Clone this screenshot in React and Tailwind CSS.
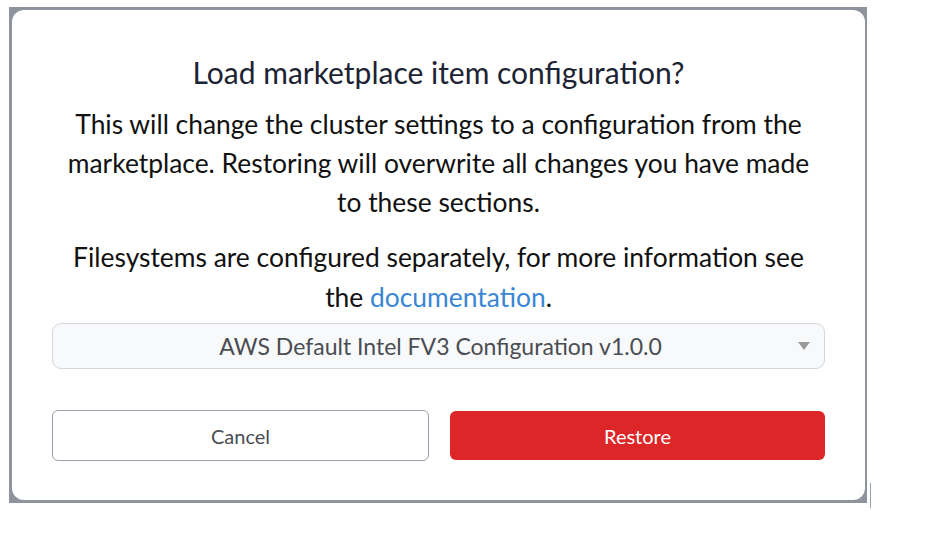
const RestoreDialog = () => {
  return (
    <div className="flex h-full w-full flex-col rounded-[12px] bg-white px-[40px] pt-[43px]">
      {/* Header */}
      <h2 className="text-center text-[30px] leading-[38px] text-[#1c2333]">
        Load marketplace item configuration?
      </h2>

      {/* Body */}
      <p className="mt-[14px] px-[6px] text-center text-[26.4px] leading-[39px] text-[#111]">
        This will change the cluster settings to a configuration from the marketplace. Restoring will
        overwrite all changes you have made to these sections.
      </p>
      <p className="mt-[15px] px-[6px] text-center text-[26.4px] leading-[40px] text-[#111]">
        Filesystems are configured separately, for more information see the{' '}
        <a href="#" className="text-[#3a86d4]">
          documentation
        </a>
        .
      </p>

      {/* Config select */}
      <div className="mt-[6px] flex h-[46px] items-center rounded-[9px] border border-[#d3d6dc] bg-[#f8f9fb] pl-[30px] pr-[14px]">
        <span className="flex-1 text-center text-[23px] text-[#4a4d52]">
          AWS Default Intel FV3 Configuration v1.0.0
        </span>
        <svg width="12" height="8" viewBox="0 0 12 8" className="text-[#9a9a9a]">
          <path d="M0 0h12L6 8z" fill="currentColor" />
        </svg>
      </div>

      {/* Actions */}
      <div className="mt-[41px] flex gap-[21px]">
        <button className="flex h-[51px] flex-1 items-center justify-center rounded-[6px] border border-[#9aa0ab] bg-white text-[20px] text-[#4a4d52]">
          Cancel
        </button>
        <button className="mt-px flex h-[49px] flex-1 items-center justify-center rounded-[6px] bg-[#dc2628] text-[20px] text-white">
          Restore
        </button>
      </div>
    </div>
  );
};

export default function App() {
  return (
    <div
      className="flex h-[556px] w-[939px] bg-white pl-[9px] pt-[7px]"
      style={{ fontFamily: 'Lato, "Open Sans", sans-serif' }}
    >
      <div className="h-[496px] w-[858px] bg-[#8e939e] pb-[3px] pl-[3px] pr-[2px] pt-[3px]">
        <RestoreDialog />
      </div>
      <div className="ml-[3px] mt-[476px] h-[25px] w-px bg-[#9aa0ab]" />
    </div>
  );
}
